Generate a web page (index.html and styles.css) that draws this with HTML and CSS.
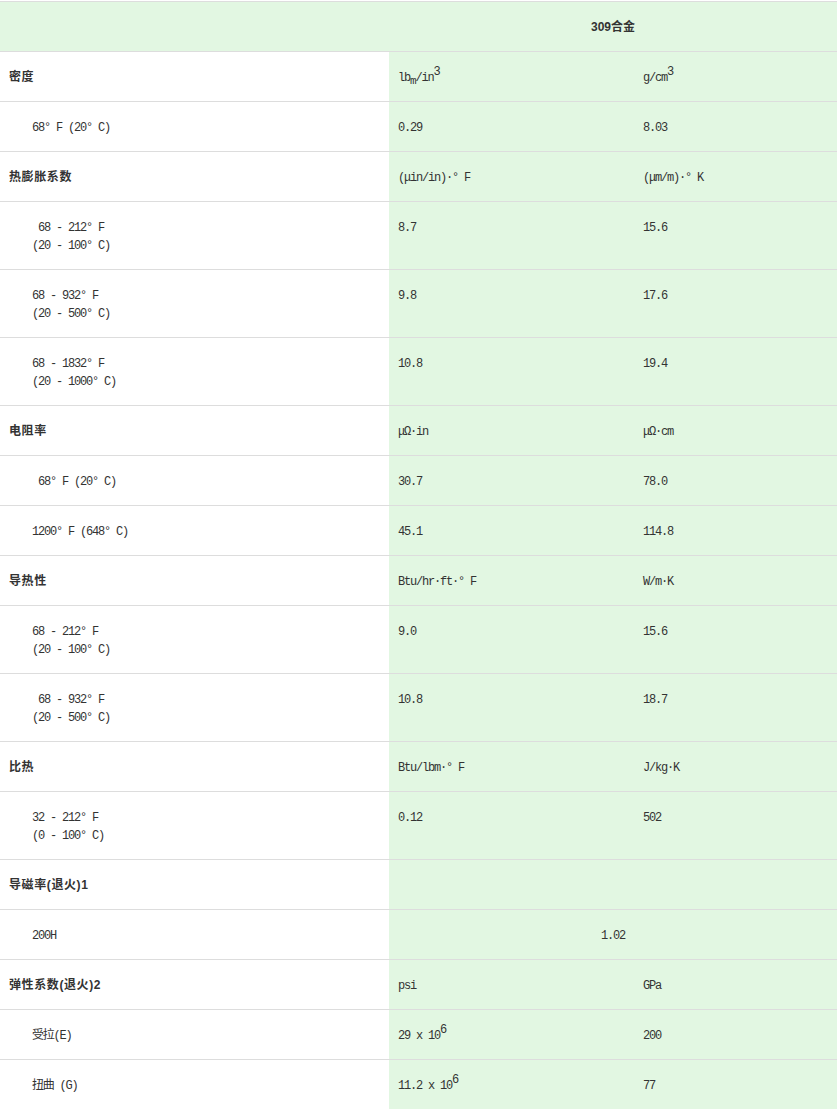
FILE: index.html
```html
<!DOCTYPE html>
<html lang="zh-CN">
<head>
<meta charset="utf-8">
<title>309合金 物理性能</title>
<link rel="stylesheet" href="styles.css">
</head>
<body>
<table class="props">
  <colgroup>
    <col class="c-label">
    <col class="c-imp">
    <col class="c-met">
  </colgroup>
  <thead>
    <tr class="head">
      <th></th>
      <th colspan="2">309合金</th>
    </tr>
  </thead>
  <tbody>
    <tr><td class="h">密度</td><td>lb<sub>m</sub>/in<sup>3</sup></td><td>g/cm<sup>3</sup></td></tr>
    <tr><td class="s">68° F (20° C)</td><td>0.29</td><td>8.03</td></tr>

    <tr><td class="h">热膨胀系数</td><td>(μin/in)·° F</td><td>(μm/m)·° K</td></tr>
    <tr><td class="s"><span class="l1">68 - 212° F</span><br>(20 - 100° C)</td><td>8.7</td><td>15.6</td></tr>
    <tr><td class="s">68 - 932° F<br>(20 - 500° C)</td><td>9.8</td><td>17.6</td></tr>
    <tr><td class="s">68 - 1832° F<br>(20 - 1000° C)</td><td>10.8</td><td>19.4</td></tr>

    <tr><td class="h">电阻率</td><td>μΩ·in</td><td>μΩ·cm</td></tr>
    <tr><td class="s"><span class="l1">68° F (20° C)</span></td><td>30.7</td><td>78.0</td></tr>
    <tr><td class="s">1200° F (648° C)</td><td>45.1</td><td>114.8</td></tr>

    <tr><td class="h">导热性</td><td>Btu/hr·ft·° F</td><td>W/m·K</td></tr>
    <tr><td class="s">68 - 212° F<br>(20 - 100° C)</td><td>9.0</td><td>15.6</td></tr>
    <tr><td class="s"><span class="l1">68 - 932° F</span><br>(20 - 500° C)</td><td>10.8</td><td>18.7</td></tr>

    <tr><td class="h">比热</td><td>Btu/lbm·° F</td><td>J/kg·K</td></tr>
    <tr><td class="s">32 - 212° F<br>(0 - 100° C)</td><td>0.12</td><td>502</td></tr>

    <tr><td class="h">导磁率(退火)1</td><td></td><td></td></tr>
    <tr><td class="s">200H</td><td colspan="2" class="center">1.02</td></tr>

    <tr><td class="h">弹性系数(退火)2</td><td>psi</td><td>GPa</td></tr>
    <tr><td class="s">受拉(E)</td><td>29 x 10<sup>6</sup></td><td>200</td></tr>
    <tr><td class="s">扭曲 (G)</td><td>11.2 x 10<sup>6</sup></td><td>77</td></tr>
  </tbody>
</table>
</body>
</html>
```
FILE: styles.css
```css
html, body {
  margin: 0;
  padding: 0;
  background: #ffffff;
}

body {
  padding-top: 1px;
}

.props {
  width: 837px;
  table-layout: fixed;
  border-collapse: collapse;
  color: #333333;
  font-family: "Liberation Mono", "Noto Sans CJK SC", monospace;
  font-size: 12px;
  letter-spacing: -1.2px;
}

.c-label { width: 389px; }
.c-imp { width: 245px; }
.c-met { width: 203px; }

.props tr {
  border-top: 1px solid #dddddd;
}

.props th,
.props td {
  padding: 17px 9px 14px 9px;
  line-height: 18px;
  height: 18px;
  vertical-align: top;
  text-align: left;
  background: #e2f7e2;
  white-space: nowrap;
}

.props td:first-child {
  background: #ffffff;
}

.props .head th {
  padding-top: 16px;
  padding-bottom: 15px;
  background: #e2f7e2;
  font-family: "Liberation Sans", "Noto Sans CJK SC", sans-serif;
  font-weight: bold;
  letter-spacing: 0;
  text-align: center;
  color: #333333;
}

.props td.h {
  padding-top: 16px;
  padding-bottom: 15px;
  font-family: "Liberation Sans", "Noto Sans CJK SC", sans-serif;
  font-weight: bold;
  letter-spacing: 0.6px;
  color: #333333;
}

.props td.s {
  padding-left: 32px;
}

.l1 {
  padding-left: 6px;
}

.props td.center {
  text-align: center;
}

sup, sub {
  line-height: 0;
  font-size: 12px;
  letter-spacing: -1.2px;
}

sup {
  vertical-align: 6px;
}

sub {
  vertical-align: -3px;
  font-size: 11px;
}
```
